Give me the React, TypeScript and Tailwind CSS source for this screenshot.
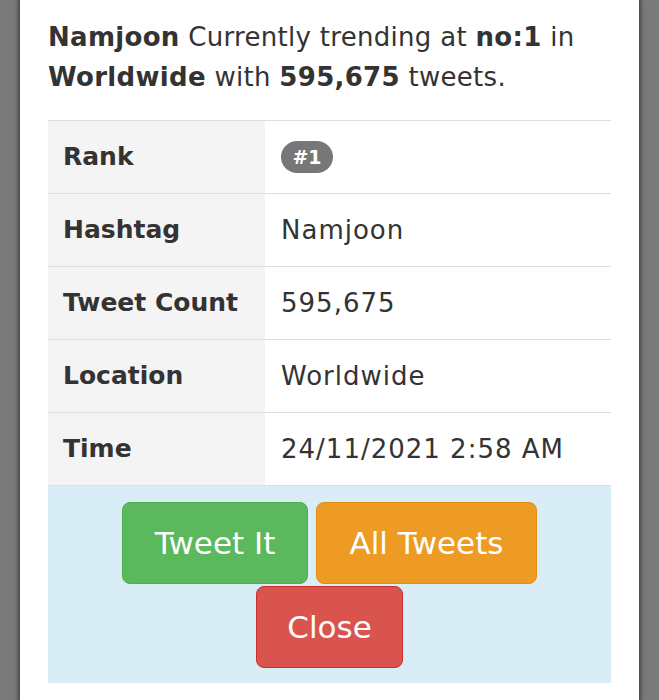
import React from "react";

const rows: { label: string; value: React.ReactNode }[] = [
  {
    label: "Rank",
    value: (
      <span className="inline-flex h-[32px] w-[52px] items-center justify-center rounded-full bg-[#777777] text-[19px] font-bold tracking-normal text-white">
        #1
      </span>
    ),
  },
  { label: "Hashtag", value: "Namjoon" },
  { label: "Tweet Count", value: "595,675" },
  { label: "Location", value: "Worldwide" },
  { label: "Time", value: "24/11/2021 2:58 AM" },
];

export default function App() {
  return (
    <div
      className="flex h-[700px] w-[659px] overflow-hidden bg-[#7a7a7a] px-[20px] text-[#333333]"
      style={{ fontFamily: '"DejaVu Sans", "Open Sans", sans-serif' }}
    >
      <div className="flex-1 bg-white px-[28px] pt-[17px] shadow-[0_0_4px_2px_rgba(0,0,0,0.45)]">
        <p className="text-[26px] leading-[40px] tracking-[0.3px]">
          <b>Namjoon</b> Currently trending at <b>no:1</b> in <b>Worldwide</b> with <b>595,675</b> tweets.
        </p>
        <div className="mt-[23px]">
          {rows.map((r) => (
            <div key={r.label} className="flex h-[73px] border-t border-[#dddddd]">
              <div className="flex w-[217px] items-center bg-[#f5f4f4] pl-[15px] text-[25px] font-bold">
                {r.label}
              </div>
              <div className="flex flex-1 items-center pl-[16px] text-[26px] tracking-[1px]">{r.value}</div>
            </div>
          ))}
          <div className="flex flex-wrap justify-center gap-x-[8px] gap-y-[2px] border-t border-[#dddddd] bg-[#d9edf7] pb-[15px] pt-[16px]">
            <button className="h-[82px] w-[186px] rounded-[8px] border border-[#4cae4c] bg-[#5cb85c] text-[31px] text-white">
              Tweet It
            </button>
            <button className="h-[82px] w-[221px] rounded-[8px] border border-[#e38d13] bg-[#ed9b24] text-[31px] text-white">
              All Tweets
            </button>
            <button className="h-[82px] w-[147px] rounded-[8px] border border-[#c9302c] bg-[#d9534f] text-[31px] text-white">
              Close
            </button>
          </div>
        </div>
      </div>
    </div>
  );
}
